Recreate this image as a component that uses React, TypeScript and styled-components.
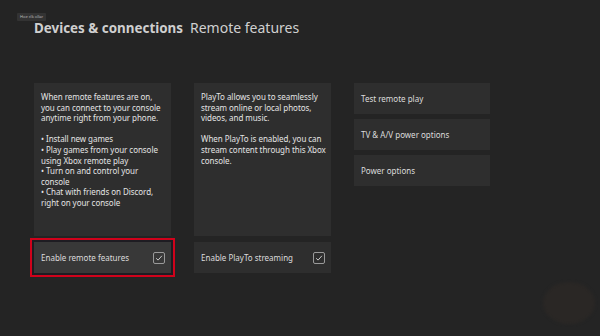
import React from "react";
import styled, { createGlobalStyle } from "styled-components";

const Global = createGlobalStyle`
  html, body { margin: 0; padding: 0; background: #242424; }
  body { font-family: "Noto Sans", "Open Sans", sans-serif; color: #e2e2e2; }
  * { box-sizing: border-box; }
`;

const Page = styled.div`
  position: relative;
  width: 600px;
  height: 336px;
  overflow: hidden;
  background: #242424;
  padding: 21px 34px 0 34px;
`;

const Hint = styled.div`
  position: absolute;
  left: 17px;
  top: 13px;
  height: 8px;
  padding: 0 3px;
  background: #333333;
  border-radius: 1px;
  color: #bdbdbd;
  font-size: 4px;
  line-height: 8px;
  white-space: nowrap;
`;

const Header = styled.h1`
  margin: 0;
  height: 14px;
  display: flex;
  align-items: baseline;
  gap: 7px;
  font-size: 14px;
  line-height: 14px;
  font-weight: 400;
  color: #d6d6d6;
  white-space: nowrap;
`;

const Section = styled.span`
  font-weight: 700;
  font-size: 13.4px;
  color: #cfcfcf;
`;

const Sub = styled.span`
  font-weight: 400;
  font-size: 14px;
  color: #d0d0d0;
`;

const Columns = styled.div`
  margin-top: 48px;
  display: grid;
  grid-template-columns: 137px 137px 136px;
  column-gap: 23px;
  align-items: start;
`;

const Column = styled.div`
  display: flex;
  flex-direction: column;
  gap: 6px;
`;

const InfoPanel = styled.div`
  height: 153px;
  background: #2e2e2e;
  padding: 9px 4px 9px 7px;
  font-size: 8px;
  letter-spacing: -0.05px;
  line-height: 10.6px;
  color: #e4e4e4;
`;

const Para = styled.p`
  margin: 0 0 10.6px 0;
`;

const Toggle = styled.div<{ $focused?: boolean }>`
  position: relative;
  height: 31px;
  display: flex;
  align-items: center;
  justify-content: space-between;
  padding: 0 6px 0 7px;
  background: ${(p) => (p.$focused ? "#383838" : "#2e2e2e")};
  font-size: 8px;
  color: #dcdcdc;
  outline: ${(p) => (p.$focused ? "2px solid #d0021b" : "none")};
  outline-offset: 2px;
  box-shadow: ${(p) => (p.$focused ? "0 0 0 2px #1e1c22" : "none")};
`;

const CheckBox = styled.span`
  width: 12px;
  height: 12px;
  border: 1.3px solid #9a9a9a;
  border-radius: 2px;
  display: flex;
  align-items: center;
  justify-content: center;
`;

const ListItem = styled.div`
  height: 31px;
  display: flex;
  align-items: center;
  padding: 0 7px;
  background: #2e2e2e;
  font-size: 8px;
  color: #dcdcdc;
`;

const List = styled.div`
  display: flex;
  flex-direction: column;
  gap: 5px;
`;

const Glow = styled.div`
  position: absolute;
  left: 543px;
  top: 282px;
  width: 52px;
  height: 42px;
  border-radius: 50%;
  background: #2a2725;
  filter: blur(1.5px);
`;

const Check = () => (
  <CheckBox>
    <svg width="8" height="8" viewBox="0 0 8 8">
      <path d="M1.2 4.3 L3.1 6.1 L6.9 1.8" fill="none" stroke="#c8c8c8" strokeWidth="1" />
    </svg>
  </CheckBox>
);

export default function App() {
  return (
    <>
      <Global />
      <Page>
        <Hint>Hoe clk ollar</Hint>
        <Header>
          <Section>Devices &amp; connections</Section>
          <Sub>Remote features</Sub>
        </Header>
        <Columns>
          <Column>
            <InfoPanel>
              <Para>When remote features are on, you can connect to your console anytime right from your phone.</Para>
              <Para>
                • Install new games
                <br />• Play games from your console using Xbox remote play
                <br />• Turn on and control your console
                <br />• Chat with friends on Discord, right on your console
              </Para>
            </InfoPanel>
            <Toggle $focused>
              Enable remote features
              <Check />
            </Toggle>
          </Column>
          <Column>
            <InfoPanel>
              <Para>PlayTo allows you to seamlessly stream online or local photos, videos, and music.</Para>
              <Para>When PlayTo is enabled, you can stream content through this Xbox console.</Para>
            </InfoPanel>
            <Toggle>
              Enable PlayTo streaming
              <Check />
            </Toggle>
          </Column>
          <List>
            <ListItem>Test remote play</ListItem>
            <ListItem>TV &amp; A/V power options</ListItem>
            <ListItem>Power options</ListItem>
          </List>
        </Columns>
        <Glow />
      </Page>
    </>
  );
}
